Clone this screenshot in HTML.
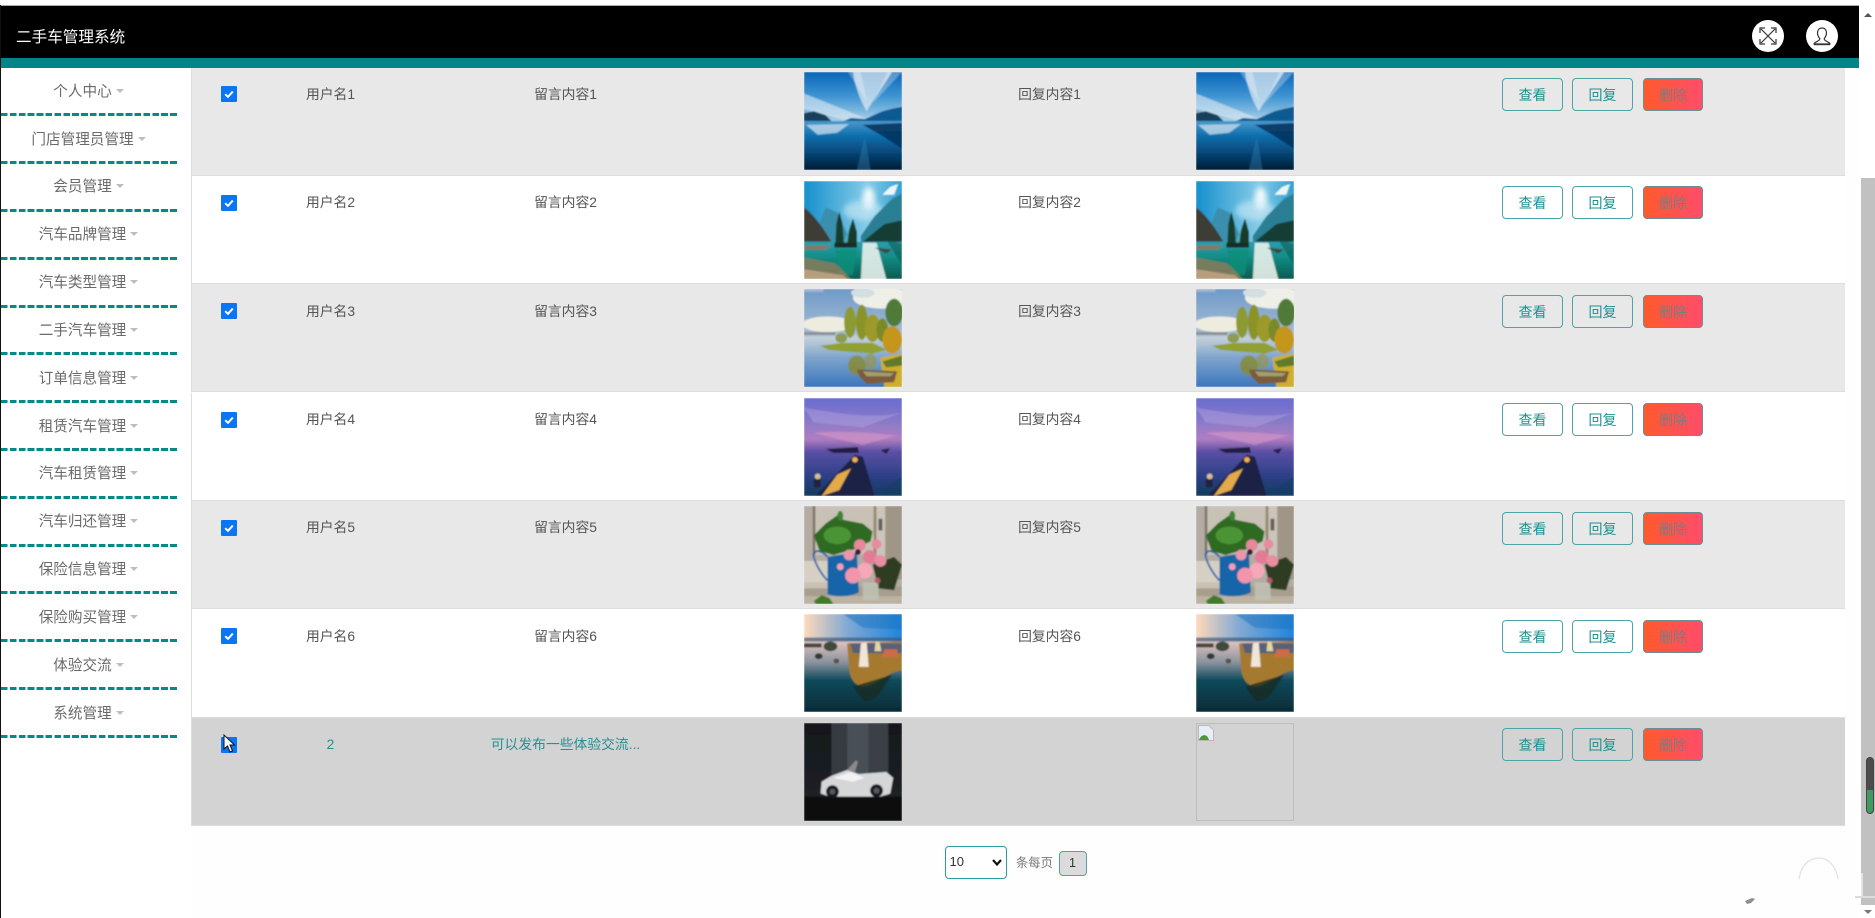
<!DOCTYPE html>
<html lang="zh-CN">
<head>
<meta charset="utf-8">
<title>二手车管理系统</title>
<style>
*{box-sizing:border-box}
html,body{margin:0;padding:0;width:1875px;height:918px;overflow:hidden;background:#fefefe;font-family:"Liberation Sans","Noto Sans CJK SC",sans-serif}
.abs{position:absolute}
#hdr{position:absolute;left:1px;top:6px;width:1858px;height:52px;background:#000;z-index:5}
#bar{position:absolute;left:1px;top:58px;width:1858px;height:10px;background:#00868a;z-index:5}
#title{position:absolute;left:16px;top:28px;font-size:15.6px;line-height:20px;color:#fff;z-index:6;white-space:nowrap}
.circ{position:absolute;top:20px;width:32px;height:32px;border-radius:50%;background:#fff;z-index:6}
.circ svg{position:absolute;left:0;top:0}
#side{position:absolute;left:1px;top:68px;width:190px;height:850px;background:#fff;z-index:3}
.mi{position:absolute;left:0;width:175px;height:20px;margin-top:1.2px;line-height:20px;font-size:14.6px;color:#6a6a6a;text-align:center;white-space:nowrap}
.mi i{display:inline-block;width:0;height:0;margin-left:4px;vertical-align:3px;border-left:4px solid transparent;border-right:4px solid transparent;border-top:4.5px solid #bdbdbd}
.ds{position:absolute;left:0;width:176px;height:3px;margin-top:-.8px;background:repeating-linear-gradient(90deg,#008b8b 0,#008b8b 6.7px,transparent 6.7px,transparent 8.9px)}
.row{position:absolute;left:191px;width:1654px;height:108.4px;border-bottom:1.5px solid #ddd;border-left:1.5px solid #ddd;background:#fff}
.g{background:#e8e8e8}
.h{background:#d3d3d3;color:#2a8f8f}
.cb{position:absolute;left:29.3px;top:19px;width:16px;height:16px;background:#0a76f6;border-radius:1px}
.cb svg{position:absolute;left:0;top:0}
.t{position:absolute;top:17.5px;height:20px;line-height:20px;font-size:13.8px;color:#555;text-align:center;white-space:nowrap}
.h .t{color:#2a8f8f}
.c1{left:78.5px;width:120px}
.c2{left:273.5px;width:200px}
.c3{left:797.5px;width:120px}
.pic{position:absolute;top:5px;width:98px;height:98px;display:block}
.p1{left:611.5px}
.p2{left:1003.5px}
.b{position:absolute;top:10.7px;width:61px;height:33px;border:1.5px solid #4ea3a8;border-radius:4px;font-size:14px;line-height:33px;text-align:center;color:#1f9191;background:transparent;white-space:nowrap}
.b1{left:1310px}
.b2{left:1380px}
.b3{left:1451px;width:60px;background:linear-gradient(90deg,#ff5a2c,#ff4d6a);color:#7d7a80;border-color:#6b8d94}
#sb{position:absolute;left:1859px;top:0;width:16px;height:918px;background:#fff;z-index:7}
#sbtrack{position:absolute;left:2px;top:178px;width:14px;height:727px;background:#c1c1c1}
#pill{position:absolute;left:7px;top:757px;width:8px;height:57px;border-radius:4px;background:linear-gradient(#4c4c4c 0,#4c4c4c 58%,#3e9a5e 58%,#3e9a5e 100%);border:1px solid #444}
</style>
</head>
<body>
<div class="abs" style="left:0;top:0;width:1875px;height:5px;background:#fff;z-index:8"></div>
<div class="abs" style="left:0;top:5px;width:1859px;height:1px;background:#aaa;z-index:8"></div>
<div class="abs" style="left:0;top:5px;width:1px;height:913px;background:#111;z-index:8"></div>
<div id="hdr"></div><div id="bar"></div>
<div id="title">二手车管理系统</div>
<div class="circ" style="left:1752px">
<svg width="32" height="32" viewBox="0 0 32 32" fill="none" stroke="#333" stroke-width="1.2"><path d="M9 9 L23 23 M23 9 L9 23"/><path d="M8 13 V8 H13 M19 8 H24 V13 M24 19 V24 H19 M13 24 H8 V19"/></svg>
</div>
<div class="circ" style="left:1806px">
<svg width="32" height="32" viewBox="0 0 32 32" fill="none" stroke="#333" stroke-width="1.2"><path d="M16 8 C12.8 8 11.5 10.5 11.5 13 C11.5 15.8 13 17.5 13.8 18.5 C14 20 12.5 20.8 10.5 21.8 C9 22.6 8 23.4 8 24 H24 C24 23.4 23 22.6 21.5 21.8 C19.5 20.8 18 20 18.2 18.5 C19 17.5 20.5 15.8 20.5 13 C20.5 10.5 19.2 8 16 8 Z"/><path d="M8 24.4 H24" stroke-width="1.6"/></svg>
</div>

<svg width="0" height="0" style="position:absolute">
<defs>
<filter id="bl" x="-5%" y="-5%" width="110%" height="110%"><feGaussianBlur stdDeviation="0.9"/></filter>
<filter id="bl2" x="-30%" y="-30%" width="160%" height="160%"><feGaussianBlur stdDeviation="3"/></filter>
<linearGradient id="a1" x1="0" y1="0" x2="0" y2="1"><stop offset="0" stop-color="#0a66b8"/><stop offset=".5" stop-color="#3f94d2"/><stop offset="1" stop-color="#a8d0e8"/></linearGradient>
<linearGradient id="a2" x1="0" y1="0" x2="0" y2="1"><stop offset="0" stop-color="#4a98cc"/><stop offset=".3" stop-color="#0f6fae"/><stop offset=".7" stop-color="#05406f"/><stop offset="1" stop-color="#011c33"/></linearGradient>
<linearGradient id="b1" x1="0" y1="0" x2="1" y2="0"><stop offset="0" stop-color="#1590cc"/><stop offset=".65" stop-color="#86cbe8"/><stop offset="1" stop-color="#2fa0d0"/></linearGradient>
<linearGradient id="b2" x1="0" y1="0" x2="0" y2="1"><stop offset="0" stop-color="#2aa0b0"/><stop offset=".45" stop-color="#108a82"/><stop offset="1" stop-color="#0a5a50"/></linearGradient>
<linearGradient id="c1" x1="0" y1="0" x2="0" y2="1"><stop offset="0" stop-color="#6f9ac8"/><stop offset=".45" stop-color="#a4bcd4"/><stop offset=".5" stop-color="#c4d0da"/><stop offset=".7" stop-color="#7ea4cc"/><stop offset="1" stop-color="#3a76bc"/></linearGradient>
<linearGradient id="d1" x1="0" y1="0" x2="0" y2="1"><stop offset="0" stop-color="#6a6ccf"/><stop offset=".25" stop-color="#8a7ac8"/><stop offset=".42" stop-color="#b07cc0"/><stop offset=".55" stop-color="#5a4fa4"/><stop offset=".8" stop-color="#2c3f86"/><stop offset="1" stop-color="#133a5c"/></linearGradient>
<linearGradient id="f1" x1="0" y1="0" x2="1" y2="0"><stop offset="0" stop-color="#ffd9ba"/><stop offset=".45" stop-color="#7fa8d4"/><stop offset="1" stop-color="#1f84dc"/></linearGradient>
<linearGradient id="f2" x1="0" y1="0" x2="0" y2="1"><stop offset="0" stop-color="#e0c4c0"/><stop offset=".3" stop-color="#88919c"/><stop offset=".55" stop-color="#0f4a5a"/><stop offset="1" stop-color="#052a36"/></linearGradient>
<linearGradient id="g1" x1="0" y1="0" x2="0" y2="1"><stop offset="0" stop-color="#14181c"/><stop offset=".74" stop-color="#1c2024"/><stop offset=".77" stop-color="#0a0c0e"/><stop offset="1" stop-color="#060708"/></linearGradient>

<symbol id="s1" viewBox="0 0 100 100" preserveAspectRatio="none"><g filter="url(#bl)">
<rect width="100" height="50" fill="url(#a1)"/>
<path d="M50 0 C52 15 58 30 64 40 C70 30 82 12 90 0 Z" fill="#dce8f2" opacity=".75"/>
<path d="M45 0 L58 0 L64 30 Z M85 0 L100 0 L70 32 Z" fill="#fff" opacity=".3"/>
<path d="M0 22 C20 30 45 40 62 47 L100 34 L100 44 L45 50 L0 38 Z" fill="#dfebf4" opacity=".6"/>
<path d="M0 50 L0 42 L10 40 L22 44 L30 52 Z" fill="#123f5c"/>
<path d="M33 53 L48 47 L62 48 L80 40 L100 35 V56 H33 Z" fill="#0d5a92"/>
<rect y="50" width="100" height="50" fill="url(#a2)"/>
<path d="M2 54 L46 53 L34 62 L14 64 Z" fill="#cfe2ee" opacity=".75"/>
<path d="M60 54 L100 52 V78 L78 64 Z" fill="#02305a" opacity=".85"/>
<path d="M62 66 L68 100 L54 100 Z" fill="#3f8cc2" opacity=".35"/>
</g></symbol>

<symbol id="s2" viewBox="0 0 100 100" preserveAspectRatio="none"><g filter="url(#bl)">
<rect width="100" height="64" fill="url(#b1)"/>
<ellipse cx="66" cy="18" rx="6" ry="12" fill="#fff" opacity=".9" filter="url(#bl2)"/>
<ellipse cx="60" cy="30" rx="20" ry="10" fill="#d0ecf6" opacity=".6" filter="url(#bl2)"/>
<path d="M80 14 L88 6 L96 3 L92 14 Z" fill="#fff" opacity=".9"/>
<path d="M8 62 L22 27 L34 32 L48 62 Z" fill="#3a8fae"/>
<path d="M46 50 L52 62 H40 Z" fill="#4fa8c0"/>
<path d="M58 56 L72 36 L90 18 L100 13 V62 H58 Z" fill="#2c7f94"/>
<path d="M60 62 L82 44 L100 40 V64 Z" fill="#123c34"/>
<path d="M0 27 C8 32 20 48 28 62 H0 Z" fill="#3c3c34"/>
<rect y="62" width="100" height="38" fill="url(#b2)"/>
<path d="M32 65 L33 44 L36 31 L39 42 L41 65 Z M44 65 L46 50 L50 38 L54 52 L54 65 Z" fill="#143c2c"/>
<path d="M31 63 H54 V68 H31 Z" fill="#1c2c20"/>
<path d="M0 66 H28 L22 70 H0 Z" fill="#8a7660"/>
<path d="M32 70 H54 L50 96 H36 Z" fill="#0f8e78" opacity=".8"/>
<path d="M60 63 L74 63 L84 100 L58 100 Z" fill="#eef2ee" opacity=".88"/>
<path d="M72 68 L90 70 L84 74 Z" fill="#3a4a40"/>
<path d="M0 78 L32 84 L48 100 L0 100 Z" fill="#8a7d5c" opacity=".85"/>
<path d="M0 90 L40 96 L44 100 L0 100 Z" fill="#b79e7c"/>
<path d="M84 60 L100 64 V86 Z" fill="#0c5a54" opacity=".6"/>
</g></symbol>

<symbol id="s3" viewBox="0 0 100 100" preserveAspectRatio="none"><g filter="url(#bl)">
<rect width="100" height="100" fill="url(#c1)"/>
<ellipse cx="80" cy="9" rx="30" ry="11" fill="#eef0e8"/>
<ellipse cx="60" cy="4" rx="12" ry="5" fill="#d4dfe2"/>
<ellipse cx="24" cy="36" rx="26" ry="8" fill="#edecdf"/>
<rect x="0" y="44" width="32" height="3" fill="#8a9098"/>
<ellipse cx="92" cy="24" rx="9" ry="14" fill="#4f7a38"/>
<ellipse cx="47" cy="34" rx="6" ry="16" fill="#8d9a30"/>
<ellipse cx="59" cy="34" rx="6" ry="18" fill="#8a9428"/>
<ellipse cx="70" cy="40" rx="8" ry="14" fill="#9c9a2a"/>
<ellipse cx="80" cy="42" rx="6" ry="12" fill="#7a8a28"/>
<ellipse cx="38" cy="50" rx="6" ry="5" fill="#8e9c50"/>
<ellipse cx="90" cy="52" rx="10" ry="14" fill="#c4961e"/>
<path d="M16 58 L40 55 L70 55 L84 62 L70 66 L45 64 L25 62 Z" fill="#90a030"/>
<path d="M78 70 L100 66 V100 H82 Z" fill="#cfae2e"/>
<path d="M80 74 L100 68 V78 L84 80 Z" fill="#5e7a2a"/>
<ellipse cx="54" cy="78" rx="9" ry="10" fill="#8a8a2a" opacity=".8"/>
<ellipse cx="68" cy="74" rx="6" ry="8" fill="#a09428" opacity=".55"/>
<path d="M54 82 L95 84 L92 95 L64 97 L57 90 Z" fill="#7a5c3a"/>
<path d="M60 84 L92 86 L88 89 L64 89 Z" fill="#a0a070"/>
<rect x="0" y="0" width="20" height="3" fill="#ccd" opacity=".5"/>
</g></symbol>

<symbol id="s4" viewBox="0 0 100 100" preserveAspectRatio="none"><g filter="url(#bl)">
<rect width="100" height="100" fill="url(#d1)"/>
<path d="M0 10 C30 15 70 22 100 15 L60 30 L10 25 Z" fill="#b8aae4" opacity=".4"/>
<path d="M10 36 C30 32 70 36 95 38 L60 48 Z" fill="#e09cc8" opacity=".5"/>
<path d="M22 52 L55 50 L56 56 L30 56 Z" fill="#241f44"/>
<path d="M78 53 L88 51 L84 57 Z" fill="#231f4a"/>
<path d="M52 58 L60 60 L72 100 L12 100 Z" fill="#1a2044"/>
<path d="M34 78 L48 72 L36 94 L18 100 Z" fill="#e3aa48"/>
<circle cx="52" cy="63" r="2.8" fill="#f2b14c"/>
<circle cx="14" cy="80" r="3" fill="#d8c090"/>
<rect x="10" y="83" width="7" height="8" fill="#20243c"/>
<path d="M70 100 L100 80 V100 Z" fill="#183e68" opacity=".7"/>
</g></symbol>

<symbol id="s5" viewBox="0 0 100 100" preserveAspectRatio="none"><g filter="url(#bl)">
<rect width="100" height="100" fill="#b4aca2"/>
<rect x="11" y="0" width="60" height="50" fill="#c8c1b6"/>
<rect x="9" y="0" width="2.5" height="50" fill="#7c7266"/>
<rect x="71" y="0" width="3" height="60" fill="#9a8a72"/>
<rect x="74" y="0" width="9" height="60" fill="#cbc4ba"/>
<rect x="83" y="0" width="17" height="75" fill="#a09688"/>
<rect x="76" y="13" width="4" height="12" fill="#66605a"/>
<rect x="0" y="56" width="26" height="26" fill="#d6cfc4"/>
<rect y="82" width="100" height="18" fill="#a89e8e"/>
<rect y="78" width="30" height="6" fill="#c8c0b2"/>
<path d="M0 92 H100 V100 H0 Z" fill="#bcb2a2"/>
<path d="M24 52 C34 50 46 48 54 48 L56 88 C48 93 32 93 24 90 Z" fill="#1565a8"/>
<path d="M24 52 C18 44 8 44 10 52 C12 60 18 70 24 76" fill="none" stroke="#1565a8" stroke-width="1.8"/>
<path d="M10 30 L22 18 L36 8 L40 14 L60 18 L70 26 L68 36 L52 44 L30 50 L16 46 Z" fill="#2f6b20"/>
<ellipse cx="34" cy="30" rx="14" ry="9" fill="#4b9434"/>
<ellipse cx="37" cy="10" rx="3" ry="5" fill="#3c8430"/>
<path d="M70 60 L92 52 L100 60 L92 86 L76 84 Z" fill="#2d3e24"/>
<rect x="60" y="78" width="16" height="18" fill="#c0c4b8" opacity=".8"/>
<circle cx="57" cy="40" r="6" fill="#e7889e"/>
<circle cx="74" cy="39" r="5" fill="#e88aa0"/>
<circle cx="67" cy="52" r="7" fill="#e27c96"/>
<circle cx="46" cy="50" r="5.5" fill="#ee95aa"/>
<circle cx="62" cy="66" r="8" fill="#f4a8b8"/>
<circle cx="50" cy="71" r="8" fill="#f295aa"/>
<circle cx="78" cy="56" r="6" fill="#e98ea2"/>
<circle cx="37" cy="62" r="3.5" fill="#f0a0b2"/>
<circle cx="75" cy="76" r="3" fill="#b85a68"/>
<circle cx="55" cy="47" r="3" fill="#3a1c30"/>
<path d="M10 97 L18 91 L26 94 L30 100 H12 Z" fill="#3f7a2c"/>
</g></symbol>

<symbol id="s6" viewBox="0 0 100 100" preserveAspectRatio="none"><g filter="url(#bl)">
<rect width="100" height="30" fill="url(#f1)"/>
<path d="M40 0 H100 V16 L60 14 Z" fill="#1a72c0" opacity=".5"/>
<rect y="24" width="100" height="5" fill="#3a5a7a" opacity=".7"/>
<rect y="28" width="100" height="72" fill="url(#f2)"/>
<path d="M0 30 H18 V34 H0 Z" fill="#4a4438"/>
<ellipse cx="27" cy="33" rx="7" ry="5" fill="#3f4a3a"/>
<ellipse cx="15" cy="43" rx="4" ry="3" fill="#2c3a38"/>
<ellipse cx="33" cy="48" rx="2.8" ry="2.5" fill="#5a5040"/>
<path d="M44 30 L100 28 V57 C85 60 74 72 62 74 C52 74 47 66 46 56 Z" fill="#a67a2e"/>
<path d="M47 30 H100 V40 H50 Z" fill="#58607a"/>
<path d="M58 30 L64 29 L66 54 L56 54 Z" fill="#efe6d8"/>
<path d="M73 28 L77 28 L79 38 L72 38 Z" fill="#e2d6a2"/>
<path d="M82 36 L95 36 L96 44 L80 44 Z" fill="#cc6c46"/>
<path d="M50 74 L90 62 L75 84 L62 90 Z" fill="#172a22" opacity=".75"/>
</g></symbol>

<symbol id="s7" viewBox="0 0 100 100" preserveAspectRatio="none"><g filter="url(#bl)">
<rect width="100" height="100" fill="url(#g1)"/>
<rect x="28" y="0" width="16" height="74" fill="#343a40"/>
<rect x="44" y="0" width="22" height="60" fill="#484f56"/>
<rect x="66" y="0" width="20" height="74" fill="#3a4046"/>
<path d="M17 72 L18 60 L28 54 L44 48 L56 52 L84 50 L91 56 L88 72 L78 75 H26 Z" fill="#d4d6d8"/>
<path d="M30 56 L48 50 L62 56 L50 60 Z" fill="#f2f2f2"/>
<path d="M44 48 L53 38 L55 40 L52 50 Z" fill="#8a8a8e"/>
<circle cx="29" cy="70" r="6.5" fill="#16181a"/>
<circle cx="74" cy="69" r="6.5" fill="#16181a"/>
<circle cx="29" cy="70" r="3" fill="#55585c"/>
<circle cx="74" cy="69" r="3" fill="#55585c"/>
</g></symbol>
</defs>
</svg>

<div id="side">
<div class="mi" style="top:13px">个人中心<i></i></div><div class="ds" style="top:46px"></div>
<div class="mi" style="top:60.5px">门店管理员管理<i></i></div><div class="ds" style="top:93.8px"></div>
<div class="mi" style="top:108.3px">会员管理<i></i></div><div class="ds" style="top:141.6px"></div>
<div class="mi" style="top:156.2px">汽车品牌管理<i></i></div><div class="ds" style="top:189.5px"></div>
<div class="mi" style="top:204px">汽车类型管理<i></i></div><div class="ds" style="top:237.3px"></div>
<div class="mi" style="top:251.8px">二手汽车管理<i></i></div><div class="ds" style="top:285.1px"></div>
<div class="mi" style="top:299.6px">订单信息管理<i></i></div><div class="ds" style="top:332.9px"></div>
<div class="mi" style="top:347.5px">租赁汽车管理<i></i></div><div class="ds" style="top:380.8px"></div>
<div class="mi" style="top:395.3px">汽车租赁管理<i></i></div><div class="ds" style="top:428.6px"></div>
<div class="mi" style="top:443.1px">汽车归还管理<i></i></div><div class="ds" style="top:476.4px"></div>
<div class="mi" style="top:490.9px">保险信息管理<i></i></div><div class="ds" style="top:524.2px"></div>
<div class="mi" style="top:538.8px">保险购买管理<i></i></div><div class="ds" style="top:572.1px"></div>
<div class="mi" style="top:586.6px">体验交流<i></i></div><div class="ds" style="top:619.9px"></div>
<div class="mi" style="top:634.4px">系统管理<i></i></div><div class="ds" style="top:667.7px"></div>
</div>

<div class="row g" style="top:67.3px">
<div class="cb"><svg width="16" height="16" viewBox="0 0 16 16"><path d="M4.2 8.2 L7 10.8 L11.8 5.6" fill="none" stroke="#fff" stroke-width="2"/></svg></div>
<div class="t c1">用户名1</div><div class="t c2">留言内容1</div>
<svg class="pic p1"><use href="#s1" width="98" height="98"/></svg>
<div class="t c3">回复内容1</div>
<svg class="pic p2"><use href="#s1" width="98" height="98"/></svg>
<div class="b b1">查看</div><div class="b b2">回复</div><div class="b b3">删除</div>
</div>
<div class="row" style="top:175.7px">
<div class="cb"><svg width="16" height="16" viewBox="0 0 16 16"><path d="M4.2 8.2 L7 10.8 L11.8 5.6" fill="none" stroke="#fff" stroke-width="2"/></svg></div>
<div class="t c1">用户名2</div><div class="t c2">留言内容2</div>
<svg class="pic p1"><use href="#s2" width="98" height="98"/></svg>
<div class="t c3">回复内容2</div>
<svg class="pic p2"><use href="#s2" width="98" height="98"/></svg>
<div class="b b1">查看</div><div class="b b2">回复</div><div class="b b3">删除</div>
</div>
<div class="row g" style="top:284.1px">
<div class="cb"><svg width="16" height="16" viewBox="0 0 16 16"><path d="M4.2 8.2 L7 10.8 L11.8 5.6" fill="none" stroke="#fff" stroke-width="2"/></svg></div>
<div class="t c1">用户名3</div><div class="t c2">留言内容3</div>
<svg class="pic p1"><use href="#s3" width="98" height="98"/></svg>
<div class="t c3">回复内容3</div>
<svg class="pic p2"><use href="#s3" width="98" height="98"/></svg>
<div class="b b1">查看</div><div class="b b2">回复</div><div class="b b3">删除</div>
</div>
<div class="row" style="top:392.5px">
<div class="cb"><svg width="16" height="16" viewBox="0 0 16 16"><path d="M4.2 8.2 L7 10.8 L11.8 5.6" fill="none" stroke="#fff" stroke-width="2"/></svg></div>
<div class="t c1">用户名4</div><div class="t c2">留言内容4</div>
<svg class="pic p1"><use href="#s4" width="98" height="98"/></svg>
<div class="t c3">回复内容4</div>
<svg class="pic p2"><use href="#s4" width="98" height="98"/></svg>
<div class="b b1">查看</div><div class="b b2">回复</div><div class="b b3">删除</div>
</div>
<div class="row g" style="top:500.9px">
<div class="cb"><svg width="16" height="16" viewBox="0 0 16 16"><path d="M4.2 8.2 L7 10.8 L11.8 5.6" fill="none" stroke="#fff" stroke-width="2"/></svg></div>
<div class="t c1">用户名5</div><div class="t c2">留言内容5</div>
<svg class="pic p1"><use href="#s5" width="98" height="98"/></svg>
<div class="t c3">回复内容5</div>
<svg class="pic p2"><use href="#s5" width="98" height="98"/></svg>
<div class="b b1">查看</div><div class="b b2">回复</div><div class="b b3">删除</div>
</div>
<div class="row" style="top:609.3px">
<div class="cb"><svg width="16" height="16" viewBox="0 0 16 16"><path d="M4.2 8.2 L7 10.8 L11.8 5.6" fill="none" stroke="#fff" stroke-width="2"/></svg></div>
<div class="t c1">用户名6</div><div class="t c2">留言内容6</div>
<svg class="pic p1"><use href="#s6" width="98" height="98"/></svg>
<div class="t c3">回复内容6</div>
<svg class="pic p2"><use href="#s6" width="98" height="98"/></svg>
<div class="b b1">查看</div><div class="b b2">回复</div><div class="b b3">删除</div>
</div>
<div class="row h" style="top:717.7px">
<div class="cb"></div>
<div class="t c1">2</div><div class="t c2">可以发布一些体验交流...</div>
<svg class="pic p1"><use href="#s7" width="98" height="98"/></svg>
<div class="abs" style="left:1003.5px;top:5px;width:98px;height:98px;border:1px solid #bdbdbd">
<svg width="16" height="16" viewBox="0 0 16 16" style="position:absolute;left:1px;top:1px"><path d="M.5.5 H11 L15.5 5 V15.5 H.5 Z" fill="#e8eef8" stroke="#b8b8b8"/><path d="M1 15 C3 9 9 8 11 15 Z" fill="#4a9a3a"/></svg>
</div>
<div class="b b1">查看</div><div class="b b2">回复</div><div class="b b3">删除</div>
</div>

<svg class="abs" style="left:220px;top:733px;z-index:4" width="20" height="22" viewBox="0 0 20 22"><path d="M4 2 V16 L7.5 13 L10 19 L12.5 18 L10 12 L14.5 12 Z" fill="#fff" stroke="#111" stroke-width="1"/></svg>

<div class="abs" style="left:944.5px;top:845.7px;width:62px;height:33.5px;border:1.5px solid #2f9aa0;border-radius:4px;background:#fff"></div>
<div class="abs" style="left:949.5px;top:853px;font-size:13px;line-height:18px;color:#333">10</div>
<svg class="abs" style="left:991px;top:858px" width="12" height="9" viewBox="0 0 12 9"><path d="M2 2 L6 6.5 L10 2" fill="none" stroke="#111" stroke-width="2.2"/></svg>
<div class="abs" style="left:1016px;top:853px;font-size:12.3px;line-height:20px;color:#777;white-space:nowrap">条每页</div>
<div class="abs" style="left:1058.5px;top:851px;width:28px;height:25px;border:1.5px solid #4ea3a8;border-radius:4px;background:#dbdbdb;font-size:12.5px;line-height:23px;text-align:center;color:#333">1</div>

<svg class="abs" style="left:1790px;top:850px" width="60" height="50" viewBox="0 0 60 50" fill="none"><path d="M9 29 C11 13 22 8 29 8 C38 8 46 16 48 29" stroke="#e2e2e2" stroke-width="1.2"/></svg>
<svg class="abs" style="left:1744px;top:897px" width="12" height="8" viewBox="0 0 12 8"><path d="M1 4 L8 1 L11 2 L7 6 L3 7 Z" fill="#8f8f8f"/></svg>

<div id="sb">
<svg class="abs" style="left:4px;top:12px" width="10" height="6" viewBox="0 0 10 6"><path d="M1 5 L5 1 L9 5 Z" fill="#555"/></svg>
<div id="sbtrack"></div>
<div id="pill"></div>
<div class="abs" style="left:2px;top:873px;width:1.5px;height:24px;background:#e3e3e3"></div>
<div class="abs" style="left:-4px;top:896px;width:20px;height:1.5px;background:#dcdcdc"></div>
<svg class="abs" style="left:4px;top:909px" width="10" height="6" viewBox="0 0 10 6"><path d="M1 1 L5 5 L9 1 Z" fill="#777"/></svg>
</div>
</body>
</html>
